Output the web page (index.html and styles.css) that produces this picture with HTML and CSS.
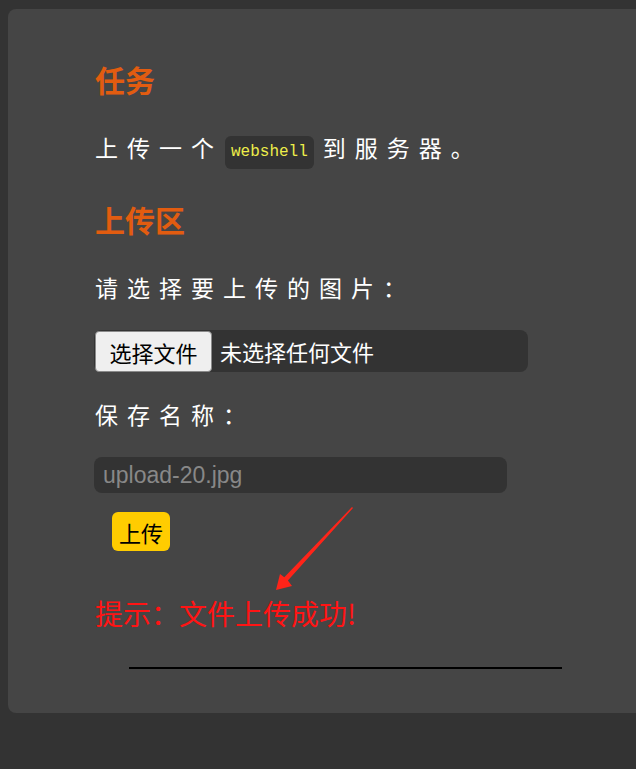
FILE: index.html
```html
<!DOCTYPE html>
<html lang="zh-CN">
<head>
    <meta charset="UTF-8">
    <meta name="viewport" content="width=device-width, initial-scale=1.0">
    <title>文件上传</title>
    <link rel="stylesheet" href="styles.css">
</head>
<body>

<div class="container">
    <h2 class="section-title">任务</h2>
    <p class="task">上传一个<code>webshell</code>到服务器。</p>

    <h2 class="section-title upload-title">上传区</h2>

    <form class="upload-form" onsubmit="return false;">
        <label class="field-label">请选择要上传的图片：</label>
        <div class="file-box">
            <span class="file-btn">选择文件</span>
            <span class="file-name">未选择任何文件</span>
        </div>

        <label class="field-label save-label" for="saveName">保存名称：</label>
        <input class="save-input" type="text" id="saveName" placeholder="upload-20.jpg">

        <button type="submit" class="upload-btn">上传</button>
    </form>

    <p class="msg">提示：文件上传成功!</p>
    <hr class="divider">

    <svg class="arrow" width="90" height="95" viewBox="0 0 90 95">
        <polygon points="82,7 83,8 17.9,80.6 22,86 6,90 10,74 14.3,77.2" fill="#ff2419"/>
    </svg>
</div>

</body>
</html>
```

FILE: styles.css
```css
html {
    background: #333333;
    overflow: hidden;
}

body {
    margin: 0;
    padding: 9px 0 0 8px;
    font-family: "Liberation Sans", "Noto Sans CJK SC", sans-serif;
    color: #ffffff;
    overflow: hidden;
}

.container {
    position: relative;
    width: 660px;
    background-color: #454545;
    border-radius: 8px;
    padding: 52px 0 44px 87px;
    box-sizing: border-box;
}

.section-title {
    margin: 0;
    font-size: 30px;
    line-height: 36px;
    font-weight: bold;
    color: #e25c10;
    font-family: "Noto Sans CJK SC", sans-serif;
}

.upload-title {
    margin-top: 32px;
}

.task {
    margin: 33px 0 0 0;
    font-size: 23px;
    line-height: 34px;
    letter-spacing: 9px;
    font-family: "Noto Sans CJK SC", sans-serif;
}

.task code {
    display: inline-block;
    font-family: "Liberation Mono", monospace;
    font-size: 16px;
    line-height: 19px;
    letter-spacing: 0;
    color: #eeee4a;
    background-color: #333333;
    padding: 7px 6px;
    border-radius: 6px;
    margin: 0 9px 0 2px;
    vertical-align: 1px;
}

.upload-form {
    display: flex;
    flex-direction: column;
    align-items: flex-start;
}

.field-label {
    display: block;
    margin-top: 33px;
    font-size: 23px;
    line-height: 34px;
    letter-spacing: 9px;
    font-family: "Noto Sans CJK SC", sans-serif;
}

.save-label {
    margin-top: 25px;
}

.file-box {
    display: flex;
    align-items: center;
    width: 434px;
    height: 42px;
    margin-top: 26px;
    margin-left: -1px;
    background-color: #333333;
    border-radius: 8px;
    box-sizing: border-box;
    font-family: "Noto Sans CJK SC", sans-serif;
    font-size: 22px;
}

.file-btn {
    display: flex;
    align-items: center;
    justify-content: center;
    height: 41px;
    width: 117px;
    margin-left: 1px;
    margin-top: 1px;
    background-color: #efefef;
    color: #000000;
    border: 1px solid #8a8a8a;
    border-radius: 4px;
    box-sizing: border-box;
}

.file-name {
    margin-left: 8px;
    color: #ffffff;
}

.save-input {
    width: 413px;
    height: 36px;
    margin-top: 26px;
    margin-left: -1px;
    padding: 0 9px;
    border: none;
    border-radius: 8px;
    background-color: #333333;
    color: #ffffff;
    font-family: "Liberation Sans", sans-serif;
    font-size: 23px;
    box-sizing: border-box;
    outline: none;
}

.save-input::placeholder {
    color: #888888;
}

.upload-btn {
    margin-top: 19px;
    margin-left: 17px;
    height: 39px;
    width: 58px;
    padding: 0;
    border: none;
    border-radius: 6px;
    background-color: #ffcc00;
    color: #000000;
    font-family: "Noto Sans CJK SC", sans-serif;
    font-size: 22px;
    cursor: pointer;
}

.msg {
    margin: 45px 0 0 0;
    font-size: 28px;
    line-height: 34px;
    color: #ff1414;
    font-family: "Noto Sans CJK SC", sans-serif;
}

.divider {
    margin: 37px 0 0 34px;
    width: 433px;
    height: 2px;
    border: none;
    background-color: #000000;
}

.arrow {
    position: absolute;
    left: 262px;
    top: 491px;
}
```
